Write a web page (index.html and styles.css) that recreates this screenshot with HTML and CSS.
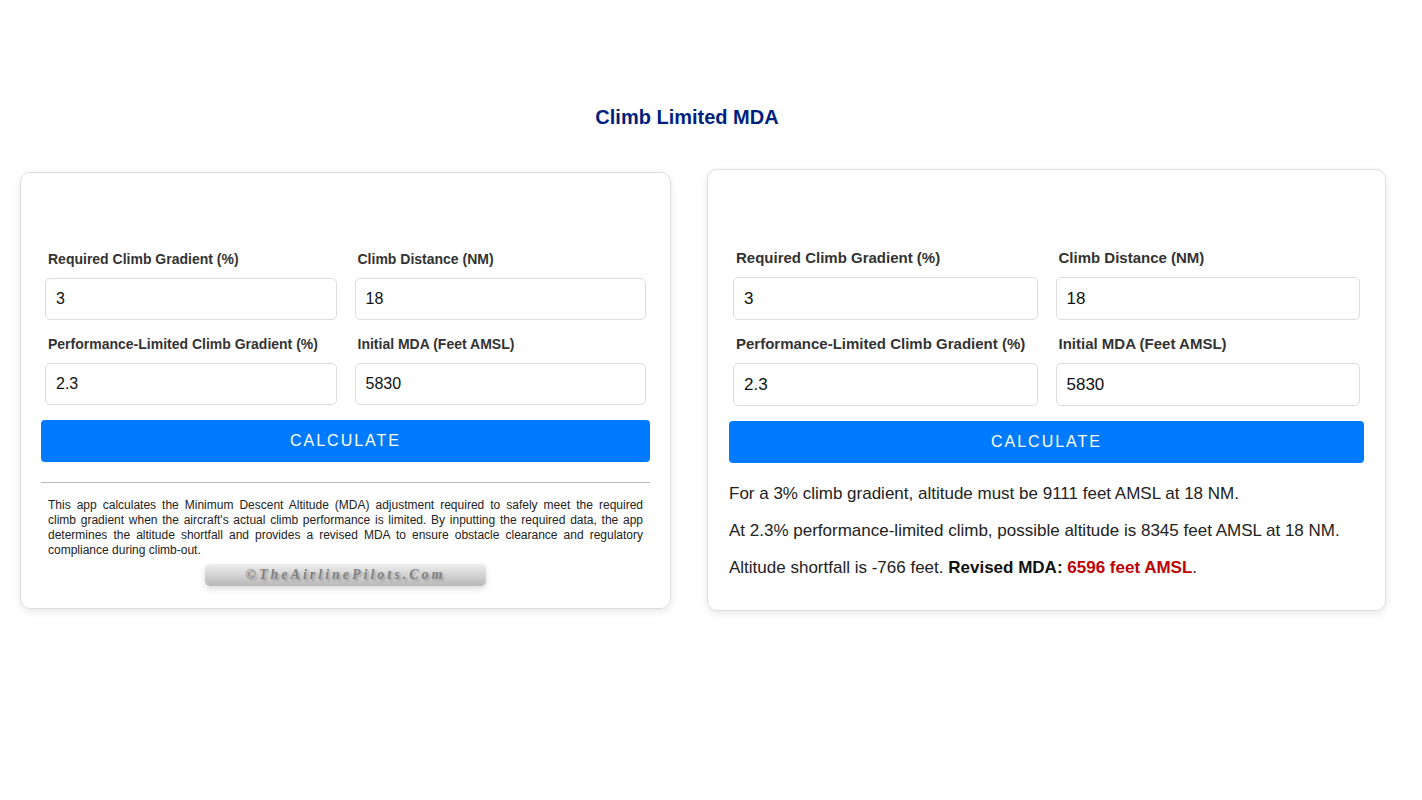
FILE: index.html
```html
<!DOCTYPE html>
<html lang="en">
<head>
<meta charset="utf-8">
<meta name="viewport" content="width=device-width, initial-scale=1">
<title>Climb Limited MDA</title>
<link rel="stylesheet" href="styles.css">
</head>
<body>
<main class="page">
  <h1 class="title">Climb Limited MDA</h1>
  <div class="cards">
    <section class="card">
      <form class="form">
        <div class="fields">
          <div class="field"><label for="a-required">Required Climb Gradient (%)</label><input id="a-required" type="text" value="3"></div>
          <div class="field"><label for="a-distance">Climb Distance (NM)</label><input id="a-distance" type="text" value="18"></div>
          <div class="field"><label for="a-limited">Performance-Limited Climb Gradient (%)</label><input id="a-limited" type="text" value="2.3"></div>
          <div class="field"><label for="a-initial">Initial MDA (Feet AMSL)</label><input id="a-initial" type="text" value="5830"></div>
        </div>
        <button class="calculate" type="button">CALCULATE</button>
      </form>
      <hr class="rule">
      <p class="about">This app calculates the Minimum Descent Altitude (MDA) adjustment required to safely meet the required climb&nbsp;gradient when the aircraft's actual climb performance is limited. By inputting the required data, the app determines the altitude shortfall and provides a revised MDA to ensure obstacle clearance and regulatory compliance during climb-out.</p>
      <div class="credit">©TheAirlinePilots.Com</div>
    </section>
    <section class="card card-large">
      <form class="form">
        <div class="fields">
          <div class="field"><label for="b-required">Required Climb Gradient (%)</label><input id="b-required" type="text" value="3"></div>
          <div class="field"><label for="b-distance">Climb Distance (NM)</label><input id="b-distance" type="text" value="18"></div>
          <div class="field"><label for="b-limited">Performance-Limited Climb Gradient (%)</label><input id="b-limited" type="text" value="2.3"></div>
          <div class="field"><label for="b-initial">Initial MDA (Feet AMSL)</label><input id="b-initial" type="text" value="5830"></div>
        </div>
        <button class="calculate" type="button">CALCULATE</button>
      </form>
      <div class="results">
        <p>For a 3% climb gradient, altitude must be 9111 feet AMSL at 18 NM.</p>
        <p>At 2.3% performance-limited climb, possible altitude is 8345 feet AMSL at 18 NM.</p>
        <p>Altitude shortfall is -766 feet. <strong>Revised MDA: <span class="revised">6596 feet AMSL</span></strong>.</p>
      </div>
    </section>
  </div>
</main>
</body>
</html>
```
FILE: styles.css
```css
* {
  box-sizing: border-box;
}

body {
  margin: 0;
  background: #fff;
  color: #222;
  font-family: "Liberation Sans", Arial, sans-serif;
}

.page {
  padding: 105px 36px 40px 20px;
}

.title {
  margin: 0 32px 40px 0;
  color: #001f7f;
  font-size: 20px;
  line-height: 24px;
  text-align: center;
}

.cards {
  display: grid;
  grid-template-columns: 651fr 679fr;
  gap: 36px;
  align-items: center;
}

.card {
  padding: 77px 20px 22px;
  border: 1px solid #ddd;
  border-radius: 10px;
  box-shadow: 0 3px 9px rgba(0, 0, 0, 0.09);
}

.form {
  display: flex;
  flex-direction: column;
  gap: 15px;
}

.fields {
  display: grid;
  grid-template-columns: 1fr 1fr;
  gap: 15px 18px;
  padding: 0 4px;
}

.field {
  display: flex;
  flex-direction: column;
  gap: 10px;
}

.field label {
  padding-left: 3px;
  color: #333;
  font-size: 14px;
  font-weight: bold;
  line-height: 18px;
}

.field input {
  width: 100%;
  height: 42px;
  padding: 0 10px;
  border: 1px solid #ddd;
  border-radius: 5px;
  background: #fff;
  color: #111;
  font-family: inherit;
  font-size: 16px;
}

.calculate {
  height: 42px;
  padding: 0;
  border: 0;
  border-radius: 4px;
  background: #007bff;
  color: #fff;
  font-family: inherit;
  font-size: 16px;
  letter-spacing: 2px;
}

.rule {
  margin: 20px 0 15px;
  border: 0;
  border-top: 1px solid #bbb;
}

.about {
  margin: 0 7px 6px;
  font-size: 12px;
  line-height: 15px;
  text-align: justify;
}

.credit {
  width: 46%;
  margin: 0 auto;
  border-radius: 5px;
  background: linear-gradient(#eee, #b8b8b8);
  box-shadow: 0 3px 6px rgba(0, 0, 0, 0.14);
  color: #808080;
  font-family: "Liberation Serif", "Times New Roman", serif;
  font-size: 14px;
  font-style: italic;
  font-weight: bold;
  letter-spacing: 3px;
  line-height: 22px;
  text-align: center;
  text-shadow: 2px 2px 2px rgba(0, 0, 0, 0.2);
}

.card-large {
  padding: 79px 21px 32px;
}

.card-large .field label {
  font-size: 15px;
}

.card-large .field input {
  height: 43px;
  font-size: 17px;
}

.results {
  display: flex;
  flex-direction: column;
  gap: 17px;
  padding-top: 21px;
  font-size: 17px;
  line-height: 20px;
}

.results p {
  margin: 0;
}

.results strong {
  color: #111;
}

.results .revised {
  color: #c00000;
}
```
